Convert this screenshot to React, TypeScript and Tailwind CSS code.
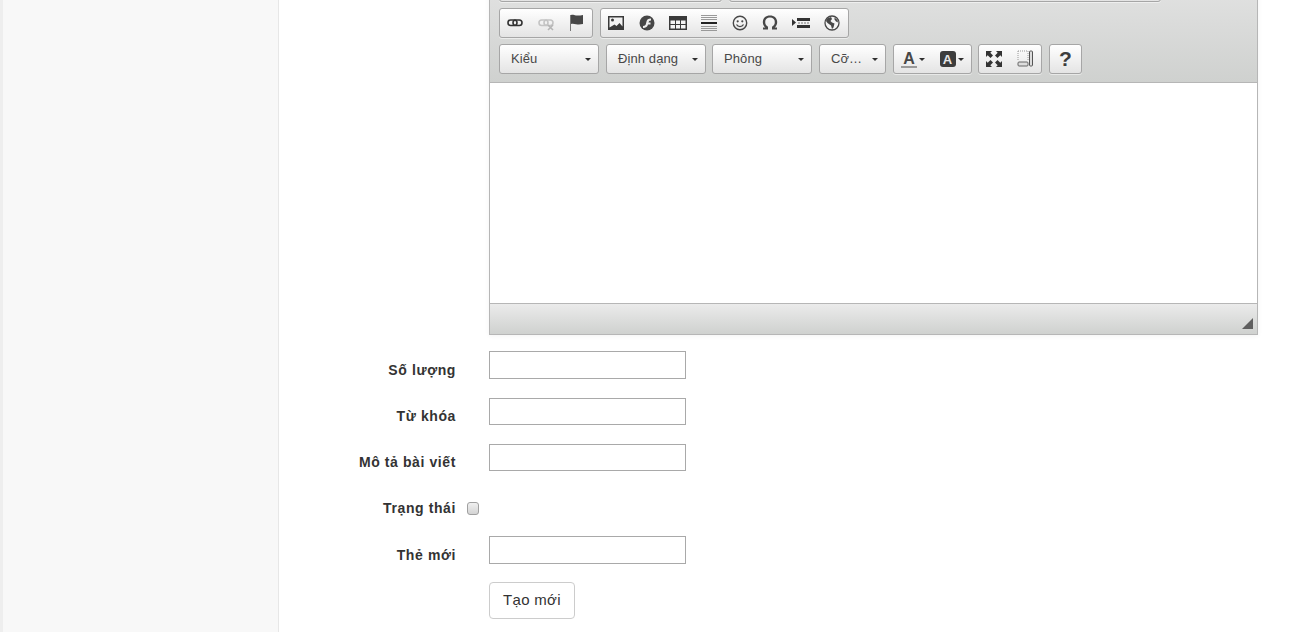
import React from "react";

const iconFill = "#474747";

function LinkIcon({ faded }: { faded?: boolean }) {
  const c = faded ? "#c4c4c4" : "#333";
  return (
    <svg width="16" height="16" viewBox="0 0 16 16">
      <rect x="1" y="5" width="9" height="5.500" rx="2.700" fill="none" stroke={c} strokeWidth="1.600" />
      <rect x="6" y="5" width="9" height="5.500" rx="2.700" fill="none" stroke={c} strokeWidth="1.600" />
      {faded && <path d="M10 10l5 5M15 10l-5 5" stroke="#b5b5b5" strokeWidth="1.600" />}
    </svg>
  );
}

function FlagIcon() {
  return (
    <svg width="16" height="18" viewBox="0 0 16 18">
      <path d="M1 1h1v16H1z" fill="#777" />
      <path d="M2 1c2-.8 3 .2 5 .4 2 .2 4 .2 7-.4v9c-3 .6-5 .5-7 .2-2-.3-3-.8-5-.2z" fill={iconFill} />
    </svg>
  );
}

function ImageIcon() {
  return (
    <svg width="16" height="16" viewBox="0 0 16 16">
      <path d="M0 1h16v14H0z" fill="#3a3a3a" />
      <path d="M1.500 2.500h13v9l-3-3.500-3 3-2-1.500-5 3z" fill="#f2f2f2" />
      <circle cx="4.500" cy="5" r="1.500" fill="#3a3a3a" />
    </svg>
  );
}

function FlashIcon() {
  return (
    <svg width="16" height="16" viewBox="0 0 16 16">
      <circle cx="8" cy="8" r="7.500" fill={iconFill} />
      <path d="M12 3.500c-3 0-4 1-4.500 3L7 8.500c-.2 1.500-1 2.300-3 2.500v2c3 0 4.500-1.200 5-3.500h2.500V7.500H9.500c.2-1.300 1-2 2.500-2z" fill="#f0f0f0" />
    </svg>
  );
}

function TableIcon() {
  return (
    <svg width="18" height="16" viewBox="0 0 18 16">
      <path d="M0 1h18v14H0z" fill="#3a3a3a" />
      <path d="M1.500 5.500h4.500v3.500H1.500zM7 5.500h4v3.500H7zM12 5.500h4.500v3.500H12zM1.500 10h4.500v3.500H1.500zM7 10h4v3.500H7zM12 10h4.500v3.500H12z" fill="#f4f4f4" />
    </svg>
  );
}

function HrIcon() {
  return (
    <svg width="16" height="18" viewBox="0 0 16 18">
      <path d="M0 1h16v1H0zM0 3h16v1H0zM0 5h16v1H0zM0 12h16v1H0zM0 14h16v1H0zM0 16h16v1H0z" fill="#999" />
      <path d="M0 8h16v2H0z" fill="#222" />
    </svg>
  );
}

function SmileyIcon() {
  return (
    <svg width="16" height="16" viewBox="0 0 16 16">
      <circle cx="8" cy="8" r="6.700" fill="none" stroke={iconFill} strokeWidth="1.400" />
      <circle cx="5.700" cy="6.300" r="1.100" fill={iconFill} />
      <circle cx="10.300" cy="6.300" r="1.100" fill={iconFill} />
      <path d="M4.500 9.500c1.500 2.800 5.500 2.800 7 0" fill="none" stroke={iconFill} strokeWidth="1.300" />
    </svg>
  );
}

function OmegaIcon() {
  return (
    <svg width="16" height="16" viewBox="0 0 16 16">
      <path d="M1 14.500h5v-2.800C4 10.700 3.200 9.200 3.200 7c0-2.800 1.900-4.500 4.800-4.500s4.800 1.700 4.800 4.500c0 2.200-.8 3.700-2.800 4.700v2.800h5V12.500h-2.300c1.600-1.300 2.500-3.200 2.500-5.500 0-3.800-3-6.500-7.200-6.500S.8 3.200.8 7c0 2.300.9 4.200 2.500 5.500H1z" fill={iconFill} />
    </svg>
  );
}

function PageBreakIcon() {
  return (
    <svg width="18" height="16" viewBox="0 0 18 16">
      <path d="M0 4l4 3.500L0 11z" fill="#333" />
      <path d="M5 3h13v3H5zM5 10h13v3H5z" fill="#333" />
      <path d="M6 7.500h2v1H6zM9 7.500h2v1H9zM12 7.500h2v1h-2zM15 7.500h2v1h-2z" fill="#777" />
    </svg>
  );
}

function GlobeIcon() {
  return (
    <svg width="16" height="16" viewBox="0 0 16 16">
      <circle cx="8" cy="8" r="7" fill="#f4f4f4" stroke={iconFill} strokeWidth="1.300" />
      <path d="M3 3.500l4-1.500 1 2-1.500 2 1.500 1.500 2.500 1-1 4-1.500 1.500-1-3.500L3.500 8 2 6zM10.500 2.500l3 2.500.5 2.500-2-1-1.500-2z" fill={iconFill} />
    </svg>
  );
}

function Caret() {
  return <span className="h-0 w-0 border-x-[3px] border-t-[3px] border-x-transparent border-t-[#2f2f2f]" />;
}

function TextColorIcon() {
  return (
    <span className="flex w-[16px] flex-col items-center">
      <span className="font-['Liberation_Sans',sans-serif] text-[16px] font-bold leading-[15px] text-[#474747]">A</span>
      <span className="h-[2px] w-[16px] bg-[#999]" />
    </span>
  );
}

function BgColorIcon() {
  return (
    <span className="flex h-[16px] w-[16px] items-center justify-center rounded-[3px] bg-[#3d3d3d] font-['Liberation_Sans',sans-serif] text-[13px] font-bold leading-none text-[#e8e8e8]">
      A
    </span>
  );
}

function MaximizeIcon() {
  return (
    <svg width="16" height="16" viewBox="0 0 16 16">
      <path d="M0 0h6L4.300 1.700 7 4.500 4.500 7 1.700 4.300 0 6zM16 0v6l-1.700-1.700L11.500 7 9 4.500l2.700-2.800L10 0zM0 16v-6l1.700 1.700L4.500 9 7 11.500l-2.700 2.800L6 16zM16 16h-6l1.700-1.700L9 11.500 11.500 9l2.800 2.700L16 10z" fill="#333" />
    </svg>
  );
}

function BlocksIcon() {
  return (
    <svg width="16" height="18" viewBox="0 0 16 18">
      <path d="M1 1h10M1 1v10M11 1v10" fill="none" stroke="#999" strokeDasharray="1 1" />
      <rect x="1" y="12" width="10" height="4" rx="1" fill="#ddd" stroke="#666" />
      <rect x="12.500" y="1" width="3" height="15" rx="1" fill="#ddd" stroke="#555" />
    </svg>
  );
}

function ToolGroup({ className, children }: { className: string; children?: React.ReactNode }) {
  return (
    <div className={`flex h-[30px] items-center rounded-[3px] border border-[#a6a6a6] bg-gradient-to-b from-white to-[#e4e4e4] shadow-[0_1px_0_rgba(255,255,255,0.5)] ${className}`}>
      {children}
    </div>
  );
}

function ToolButton({ children }: { children: React.ReactNode }) {
  return <span className="flex h-full w-[30.8px] shrink-0 items-center justify-center">{children}</span>;
}

function Combo({ label, className }: { label: string; className: string }) {
  return (
    <div className={`flex h-[30px] items-center justify-between rounded-[3px] border border-[#a6a6a6] bg-gradient-to-b from-white to-[#e4e4e4] pl-[11px] pr-[7px] text-[13px] tracking-[0.1px] text-[#484848] ${className}`}>
      <span>{label}</span>
      <Caret />
    </div>
  );
}

function Editor() {
  return (
    <div className="-mt-[36px] ml-[210px] w-[769px] border border-t-0 border-[#b6b6b6] shadow-[0_1px_5px_rgba(0,0,0,0.05)]">
      <div className="h-[119px] border-b border-[#b6b6b6] bg-gradient-to-b from-[#e6e6e6] to-[#cfd1cf] pl-[9px] pt-[8px]">
        <div className="mb-[6px] flex gap-[7px]">
          <ToolGroup className="w-[223px]" />
          <ToolGroup className="w-[432px]" />
        </div>
        <div className="mb-[6px] flex gap-[7px]">
          <ToolGroup className="w-[94px]">
            <ToolButton><LinkIcon /></ToolButton>
            <ToolButton><LinkIcon faded /></ToolButton>
            <ToolButton><FlagIcon /></ToolButton>
          </ToolGroup>
          <ToolGroup className="w-[249px]">
            <ToolButton><ImageIcon /></ToolButton>
            <ToolButton><FlashIcon /></ToolButton>
            <ToolButton><TableIcon /></ToolButton>
            <ToolButton><HrIcon /></ToolButton>
            <ToolButton><SmileyIcon /></ToolButton>
            <ToolButton><OmegaIcon /></ToolButton>
            <ToolButton><PageBreakIcon /></ToolButton>
            <ToolButton><GlobeIcon /></ToolButton>
          </ToolGroup>
        </div>
        <div className="flex">
          <Combo label="Kiểu" className="mr-[7px] w-[100px]" />
          <Combo label="Định dạng" className="mr-[6px] w-[100px]" />
          <Combo label="Phông" className="mr-[7px] w-[100px]" />
          <Combo label="Cỡ…" className="mr-[7px] w-[67px]" />
          <ToolGroup className="mr-[6px] w-[79px]">
            <span className="flex w-[39px] items-center gap-[2px] pl-[7px]"><TextColorIcon /><Caret /></span>
            <span className="flex w-[39px] items-center gap-[2px] pl-[7px]"><BgColorIcon /><Caret /></span>
          </ToolGroup>
          <ToolGroup className="mr-[7px] w-[64px]">
            <ToolButton><MaximizeIcon /></ToolButton>
            <ToolButton><BlocksIcon /></ToolButton>
          </ToolGroup>
          <ToolGroup className="w-[33px] justify-center font-['Liberation_Sans',sans-serif] text-[21px] font-bold text-[#3d3d3d]">?</ToolGroup>
        </div>
      </div>
      <div className="h-[220px] bg-white" />
      <div className="flex h-[31px] items-end justify-end border-t border-[#b6b6b6] bg-gradient-to-b from-[#ebebeb] to-[#cfd1cf] pb-[5px] pr-[4px]">
        <svg width="11" height="11" viewBox="0 0 11 11">
          <path d="M11 0v11H0z" fill="#5f5f5f" />
        </svg>
      </div>
    </div>
  );
}

function FieldRow({ label, className, labelTop, children }: { label: string; className: string; labelTop: string; children: React.ReactNode }) {
  return (
    <div className={`flex items-start ${className}`}>
      <label className={`w-[177px] text-right text-[14px] font-bold leading-[20px] tracking-[0.6px] text-[#333] ${labelTop}`}>{label}</label>
      {children}
    </div>
  );
}

function TextInput({ className }: { className: string }) {
  return <input type="text" className={`ml-[33px] w-[197px] border border-[#a9a9a9] bg-white ${className}`} />;
}

export default function App() {
  return (
    <div className="flex h-[632px] overflow-hidden bg-white font-['Liberation_Sans',Arial,sans-serif] text-[#333]">
      <aside className="w-[279px] shrink-0 border-l-[3px] border-r border-l-[#eeeeee] border-r-[#e7e7e7] bg-[#f8f8f8]" />
      <main className="flex-1">
        <Editor />
        <div className="pt-[16px]">
          <FieldRow label="Số lượng" labelTop="pt-[9px]" className="mb-[19px] h-[28px]">
            <TextInput className="h-[28px]" />
          </FieldRow>
          <FieldRow label="Từ khóa" labelTop="pt-[8px]" className="mb-[19px] h-[27px]">
            <TextInput className="h-[27px]" />
          </FieldRow>
          <FieldRow label="Mô tả bài viết" labelTop="pt-[8px]" className="mb-[27px] h-[27px]">
            <TextInput className="h-[27px]" />
          </FieldRow>
          <FieldRow label="Trạng thái" labelTop="pt-[0px]" className="mb-[18px] h-[20px]">
            <span className="ml-[11px] mt-[4px] h-[13px] w-[12px] rounded-[3px] border border-[#a0a0a0] bg-gradient-to-b from-[#f0f0f0] to-[#d4d4d4]" />
          </FieldRow>
          <FieldRow label="Thẻ mới" labelTop="pt-[9px]" className="mb-[18px] h-[28px]">
            <TextInput className="h-[28px]" />
          </FieldRow>
          <button className="ml-[210px] h-[37px] w-[86px] rounded-[4px] border border-[#cccccc] bg-white text-[15px] tracking-[0.3px] text-[#333]">
            Tạo mới
          </button>
        </div>
      </main>
    </div>
  );
}
